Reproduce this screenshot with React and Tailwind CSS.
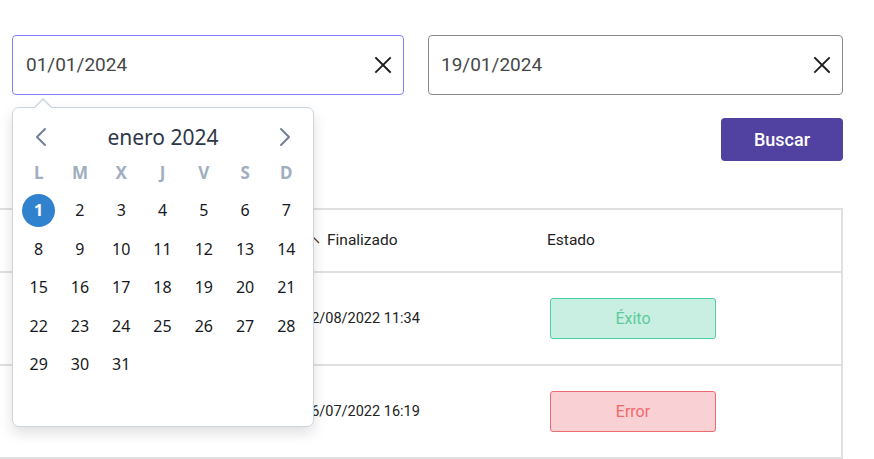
import React from "react";

const XIcon = () => (
  <svg width="18" height="18" viewBox="0 0 18 18" fill="none" stroke="#1f1f1f" strokeWidth="1.9" strokeLinecap="square">
    <path d="M2 2 L16 16 M16 2 L2 16" />
  </svg>
);

const ChevronLeft = () => (
  <svg width="12" height="20" viewBox="0 0 12 20" fill="none" stroke="#718096" strokeWidth="2" strokeLinecap="round" strokeLinejoin="round">
    <path d="M10 2 L2 10 L10 18" />
  </svg>
);
const ChevronRight = () => (
  <svg width="12" height="20" viewBox="0 0 12 20" fill="none" stroke="#718096" strokeWidth="2" strokeLinecap="round" strokeLinejoin="round">
    <path d="M2 2 L10 10 L2 18" />
  </svg>
);

const days = Array.from({ length: 31 }, (_, i) => i + 1);
const week = ["L", "M", "X", "J", "V", "S", "D"];

function Calendar() {
  return (
    <div className="absolute left-0 top-[72px] z-10 w-[302px] h-[320px]">
      <div className="absolute left-[21px] top-[-9px] w-0 h-0 border-l-[10px] border-r-[10px] border-b-[10px] border-l-transparent border-r-transparent border-b-[#cbd5e0]" />
      <div className="absolute left-[22px] top-[-7.5px] w-0 h-0 border-l-[9px] border-r-[9px] border-b-[9px] border-l-transparent border-r-transparent border-b-white z-20" />
      <div
        className="w-full h-full bg-white border border-[#cbd5e0] rounded-[7px] shadow-[0_6px_14px_rgba(0,0,0,0.13)] pl-[5px] pr-[6px] pt-[14px]"
        style={{ fontFamily: '"Noto Sans", "Open Sans", sans-serif' }}
      >
        <div className="flex items-center justify-between h-[30px] pl-[17px] pr-[16px]">
          <ChevronLeft />
          <span className="text-[21px] text-[#2d3748] leading-none">enero 2024</span>
          <ChevronRight />
        </div>
        <div className="grid grid-cols-7 mt-[8px] h-[24px] items-center">
          {week.map((w) => (
            <div key={w} className="text-center text-[17px] font-bold text-[#a0aec0] leading-none">
              {w}
            </div>
          ))}
        </div>
        <div className="grid grid-cols-7 mt-[7px] auto-rows-[38.5px]">
          {days.map((d) => (
            <div key={d} className="flex items-center justify-center">
              {d === 1 ? (
                <span className="w-[33px] h-[33px] rounded-full bg-[#3182ce] text-white font-bold text-[16px] flex items-center justify-center">
                  1
                </span>
              ) : (
                <span className="text-[16px] text-[#171923]">{d}</span>
              )}
            </div>
          ))}
        </div>
      </div>
    </div>
  );
}

export default function App() {
  return (
    <div
      className="w-[874px] h-[459px] overflow-hidden bg-white pt-[35px]"
      style={{ fontFamily: "Roboto, Arial, sans-serif" }}
    >
      <div className="flex gap-[24px] pl-[12px]">
        <div className="relative">
          <div className="w-[392px] h-[60px] border border-[#7f82f2] rounded-[4px] flex items-center justify-between pl-[13px] pr-[11px]">
            <span className="text-[19px] text-[#474747]">01/01/2024</span>
            <XIcon />
          </div>
          <Calendar />
        </div>
        <div className="w-[415px] h-[60px] border border-[#8a8a8a] rounded-[4px] flex items-center justify-between pl-[12px] pr-[11px]">
          <span className="text-[19px] text-[#474747]">19/01/2024</span>
          <XIcon />
        </div>
      </div>

      <div className="flex justify-end w-[843px] mt-[23px]">
        <button className="w-[122px] h-[43px] bg-[#5141a1] rounded-[4px] text-white text-[18px] font-medium">
          Buscar
        </button>
      </div>

      <div className="mt-[47px] w-[843px] border-2 border-l-0 border-[#e0e0e0] text-[#222]">
        <div className="grid grid-cols-[304px_243px_1fr] h-[63px] items-center border-b-2 border-[#e0e0e0] text-[15.5px]">
          <div />
          <div className="flex items-center">
            <svg width="14" height="14" viewBox="0 0 14 14" fill="none" stroke="#5a3a2a" strokeWidth="1.3" className="ml-[3px] mr-[6px]">
              <path d="M2 9 L7 4 L12 9" />
            </svg>
            <span>Finalizado</span>
          </div>
          <div>Estado</div>
        </div>
        <div className="grid grid-cols-[304px_243px_1fr] h-[93px] items-center border-b-2 border-[#e0e0e0]">
          <div />
          <div className="text-[14.5px] -ml-[1px]">02/08/2022 11:34</div>
          <div>
            <div className="ml-[3px] w-[166px] h-[41px] rounded-[3px] border border-[#4ecfa0] bg-[#c9eee2] text-[#5ccb9c] text-[16px] flex items-center justify-center">
              Éxito
            </div>
          </div>
        </div>
        <div className="grid grid-cols-[304px_243px_1fr] h-[91px] items-center">
          <div />
          <div className="text-[14.5px] -ml-[1px]">16/07/2022 16:19</div>
          <div>
            <div className="ml-[3px] w-[166px] h-[41px] rounded-[3px] border border-[#ee6b70] bg-[#f9d1d4] text-[#ef6b6b] text-[16px] flex items-center justify-center">
              Error
            </div>
          </div>
        </div>
      </div>
    </div>
  );
}
